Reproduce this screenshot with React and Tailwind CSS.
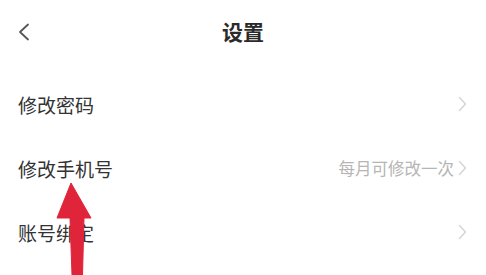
const rows = [
  { label: '修改密码', hint: '' },
  { label: '修改手机号', hint: '每月可修改一次' },
  { label: '账号绑定', hint: '' },
];

const RightChevron = () => (
  <svg width="9" height="16" viewBox="0 0 9 16" fill="none" className="shrink-0">
    <path d="M1.5 1.5 L7.5 8 L1.5 14.5" stroke="#d6d6d6" strokeWidth="1.6" strokeLinecap="round" strokeLinejoin="round" />
  </svg>
);

const App = () => {
  return (
    <div
      className="relative w-[486px] h-[275px] overflow-hidden bg-white text-[#333]"
      style={{ fontFamily: '"Noto Sans CJK SC", "Noto Sans", sans-serif' }}
    >
      {/* Header */}
      <div className="grid grid-cols-[1fr_auto_1fr] items-center h-16 px-[18px]">
        <svg width="12" height="18" viewBox="0 0 12 18" fill="none">
          <path d="M10 1.5 L2 9 L10 16.5" stroke="#555" strokeWidth="1.8" strokeLinecap="round" strokeLinejoin="round" />
        </svg>
        <h1 className="text-[21px] font-bold leading-none text-[#2a2a2a] -mt-[2px]">设置</h1>
        <div />
      </div>

      {/* Rows */}
      <ul className="mt-2">
        {rows.map((row) => (
          <li key={row.label} className="flex items-center justify-between h-16 pl-[18px] pr-[19px]">
            <span className="text-[19px] leading-none text-[#333]">{row.label}</span>
            <div className="flex items-center gap-[4px]">
              {row.hint && <span className="text-[16.5px] leading-none text-[#b5b5b5]">{row.hint}</span>}
              <RightChevron />
            </div>
          </li>
        ))}
      </ul>

      {/* Red arrow overlay */}
      <svg className="absolute left-0 top-0 pointer-events-none" width="486" height="275" viewBox="0 0 486 275">
        <path
          d="M71 183 L91 218 L84 218 L82.5 275 L72 275 L70 218 L57 218 Z"
          fill="#e0243a"
          stroke="#e0243a"
          strokeWidth="1"
          strokeLinejoin="round"
        />
      </svg>
    </div>
  );
};

export default App;
